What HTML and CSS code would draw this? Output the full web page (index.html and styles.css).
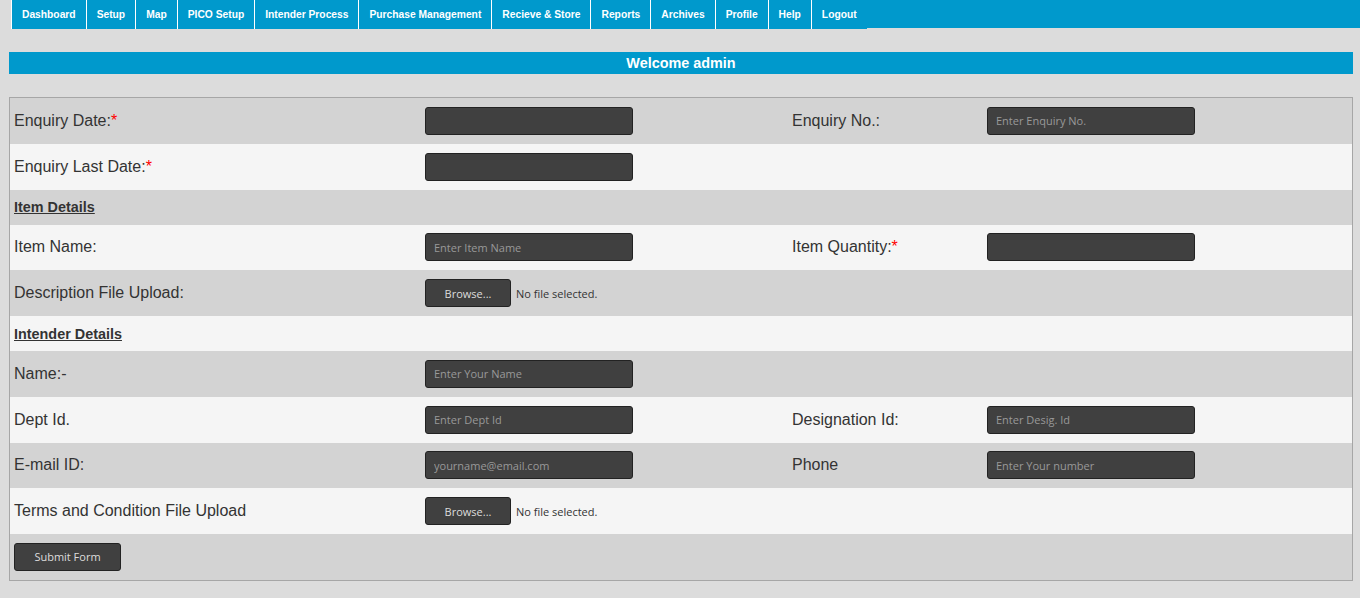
FILE: index.html
```html
<!DOCTYPE html>
<html>
<head>
<meta charset="utf-8">
<title>Enquiry Form</title>
<link rel="stylesheet" href="styles.css">
</head>
<body>
<nav class="topbar">
  <ul class="menu">
    <li><a href="#">Dashboard</a></li>
    <li><a href="#">Setup</a></li>
    <li><a href="#">Map</a></li>
    <li><a href="#">PICO Setup</a></li>
    <li><a href="#">Intender Process</a></li>
    <li><a href="#">Purchase Management</a></li>
    <li><a href="#">Recieve &amp; Store</a></li>
    <li><a href="#">Reports</a></li>
    <li><a href="#">Archives</a></li>
    <li><a href="#">Profile</a></li>
    <li><a href="#">Help</a></li>
    <li><a href="#">Logout</a></li>
  </ul>
</nav>

<div class="welcome">Welcome admin</div>

<form class="form">
  <div class="row dark">
    <div class="cell label">Enquiry Date:<span class="req">*</span></div>
    <div class="cell"><input class="field" type="text"></div>
    <div class="cell label">Enquiry No.:</div>
    <div class="cell"><input class="field" type="text" placeholder="Enter Enquiry No."></div>
  </div>
  <div class="row light">
    <div class="cell label">Enquiry Last Date:<span class="req">*</span></div>
    <div class="cell"><input class="field" type="text"></div>
    <div class="cell"></div>
    <div class="cell"></div>
  </div>
  <div class="row dark heading">
    <div class="cell section">Item Details</div>
  </div>
  <div class="row light">
    <div class="cell label">Item Name:</div>
    <div class="cell"><input class="field" type="text" placeholder="Enter Item Name"></div>
    <div class="cell label">Item Quantity:<span class="req">*</span></div>
    <div class="cell"><input class="field" type="text"></div>
  </div>
  <div class="row dark">
    <div class="cell label">Description File Upload:</div>
    <div class="cell file"><button type="button" class="btn browse">Browse...</button><span class="nofile">No file selected.</span></div>
    <div class="cell"></div>
    <div class="cell"></div>
  </div>
  <div class="row light heading">
    <div class="cell section">Intender Details</div>
  </div>
  <div class="row dark">
    <div class="cell label">Name:-</div>
    <div class="cell"><input class="field" type="text" placeholder="Enter Your Name"></div>
    <div class="cell"></div>
    <div class="cell"></div>
  </div>
  <div class="row light">
    <div class="cell label">Dept Id.</div>
    <div class="cell"><input class="field" type="text" placeholder="Enter Dept Id"></div>
    <div class="cell label">Designation Id:</div>
    <div class="cell"><input class="field" type="text" placeholder="Enter Desig. Id"></div>
  </div>
  <div class="row dark">
    <div class="cell label">E-mail ID:</div>
    <div class="cell"><input class="field" type="text" placeholder="yourname@email.com"></div>
    <div class="cell label">Phone</div>
    <div class="cell"><input class="field" type="text" placeholder="Enter Your number"></div>
  </div>
  <div class="row light">
    <div class="cell label">Terms and Condition File Upload</div>
    <div class="cell file"><button type="button" class="btn browse">Browse...</button><span class="nofile">No file selected.</span></div>
    <div class="cell"></div>
    <div class="cell"></div>
  </div>
  <div class="row dark">
    <div class="cell"><button type="button" class="btn submit">Submit Form</button></div>
  </div>
</form>
</body>
</html>
```

FILE: styles.css
```css
html, body {
  margin: 0;
  padding: 0;
}
body {
  background: #dcdcdc;
  font-family: "Liberation Sans", Arial, sans-serif;
  color: #333;
}

.topbar {
  margin-left: 11px;
  height: 28px;
  background: #0099cc;
}
.menu {
  list-style: none;
  margin: 0;
  padding: 0;
  display: flex;
  height: 29px;
}
.menu li {
  height: 29px;
  background: #0099cc;
}
.menu a {
  display: block;
  height: 29px;
  line-height: 29px;
  padding: 0 10px;
  border-left: 1px solid #fff;
  color: #fff;
  font-weight: bold;
  font-size: 10.27px;
  text-decoration: none;
  white-space: nowrap;
}

.welcome {
  margin: 24px 7px 0 9px;
  height: 22px;
  line-height: 22px;
  background: #0099cc;
  color: #fff;
  font-weight: bold;
  font-size: 14.4px;
  text-align: center;
}

.form {
  margin: 23px 7px 0 9px;
  border: 1px solid #a6a6a6;
}
.row {
  display: grid;
  grid-template-columns: 411px 367px 195px 1fr;
  align-items: center;
  height: 45.75px;
}
.row.heading {
  height: 35px;
}
.dark { background: #d3d3d3; }
.light { background: #f5f5f5; }

.cell {
  padding-left: 4px;
  display: flex;
  align-items: center;
}
.label {
  font-size: 16px;
  color: #333;
}
.req {
  color: #ff0000;
}
.section {
  grid-column: 1 / -1;
  font-size: 14.4px;
  font-weight: bold;
  text-decoration: underline;
  color: #333;
}

.field {
  box-sizing: border-box;
  width: 208px;
  height: 28px;
  margin: 0;
  padding: 0 8px;
  background: #404040;
  border: 1px solid #222;
  border-radius: 3px;
  color: #eee;
  font-family: "Open Sans", sans-serif;
  font-size: 11px;
  outline: none;
}
.field::placeholder {
  color: #999;
}

.btn {
  box-sizing: border-box;
  height: 28px;
  margin: 0;
  padding: 0;
  background: #404040;
  border: 1px solid #222;
  border-radius: 3px;
  color: #ddd;
  font-family: "Open Sans", sans-serif;
  font-size: 11px;
}
.browse { width: 86px; }
.submit { width: 107px; }
.nofile {
  margin-left: 5px;
  font-family: "Open Sans", sans-serif;
  font-size: 11px;
  color: #333;
}
```
